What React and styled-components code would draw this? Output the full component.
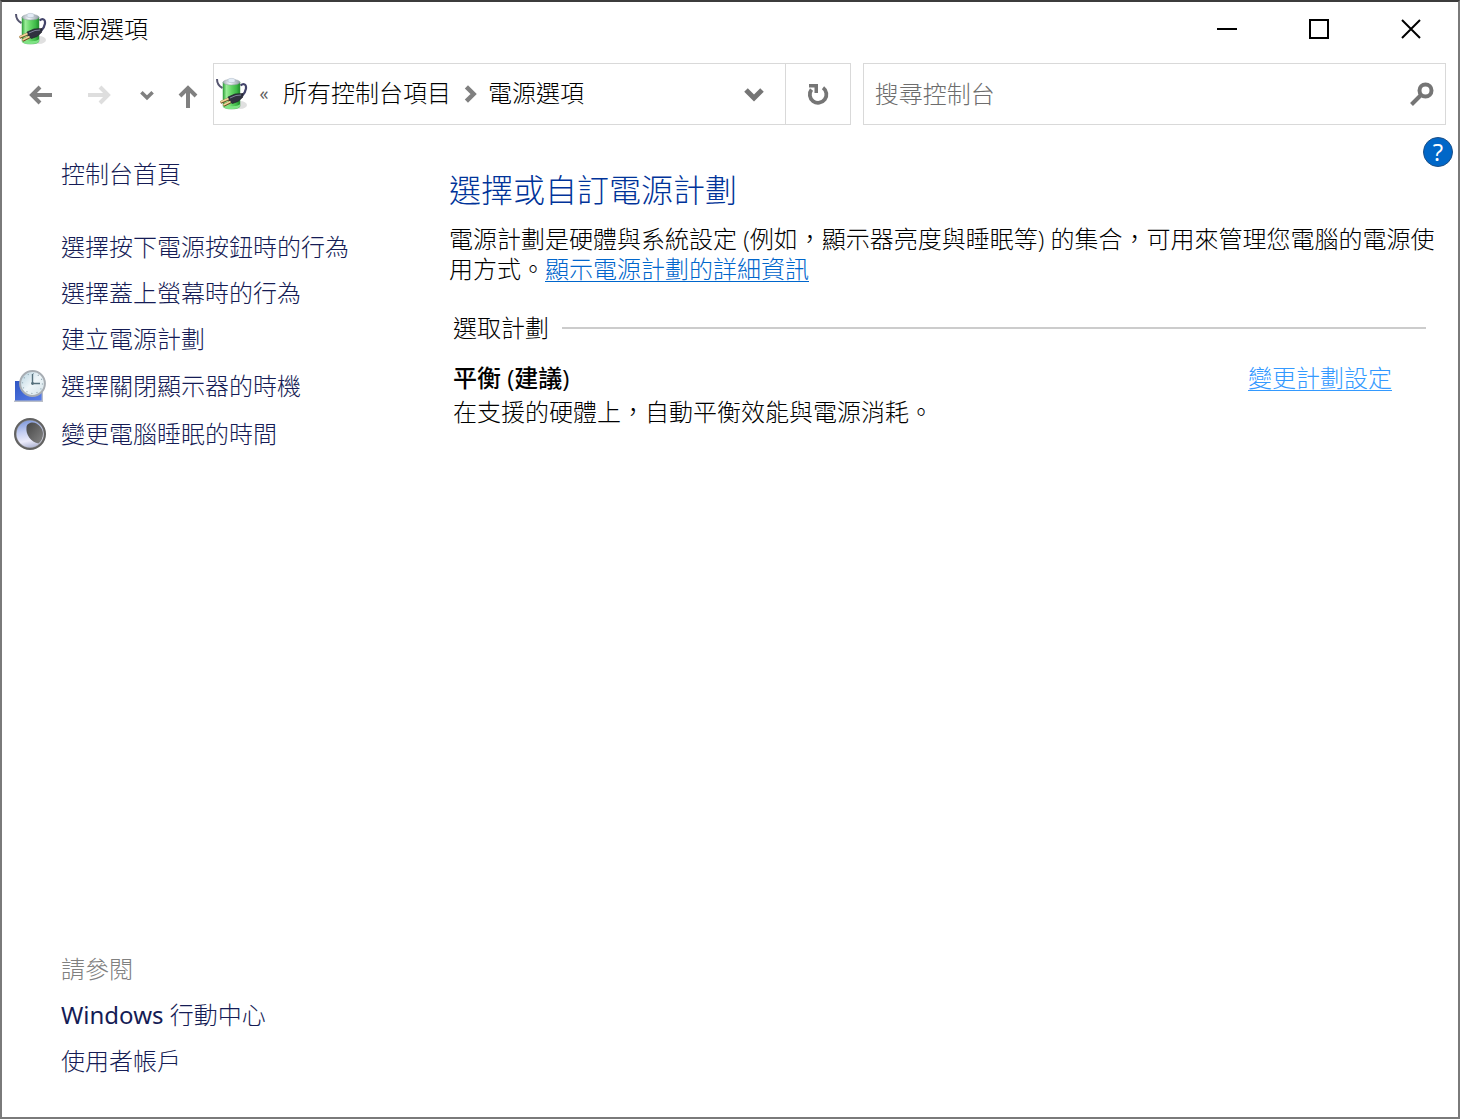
import React from "react";
import styled, { createGlobalStyle } from "styled-components";

const GlobalStyle = createGlobalStyle`
  * {
    box-sizing: border-box;
  }
  body {
    margin: 0;
    background: #ffffff;
  }
  body, button, input {
    font-family: "Open Sans", "Noto Sans CJK TC", sans-serif;
    font-size: 24px;
    font-weight: 300;
  }
`;

const tasks = [
  { label: "選擇按下電源按鈕時的行為" },
  { label: "選擇蓋上螢幕時的行為" },
  { label: "建立電源計劃" },
  { label: "選擇關閉顯示器的時機", icon: <ClockIcon /> },
  { label: "變更電腦睡眠的時間", icon: <MoonIcon /> },
];

function BatteryIcon({ id }) {
  return (
    <svg width="32" height="34" viewBox="0 0 32 34" aria-hidden="true">
      <defs>
        <linearGradient id={`${id}-body`} x1="0" x2="1" y1="0" y2="0">
          <stop offset="0" stopColor="#2fa53a" />
          <stop offset="0.2" stopColor="#9aec98" />
          <stop offset="0.5" stopColor="#63d566" />
          <stop offset="0.8" stopColor="#3db947" />
          <stop offset="1" stopColor="#1f8a2b" />
        </linearGradient>
        <linearGradient id={`${id}-cap`} x1="0" x2="1" y1="0" y2="0">
          <stop offset="0" stopColor="#a3adb5" />
          <stop offset="0.4" stopColor="#f4f8fb" />
          <stop offset="1" stopColor="#8f9aa4" />
        </linearGradient>
      </defs>
      <ellipse cx="24" cy="28" rx="7" ry="4" fill="#000000" opacity="0.12" />
      <path d="M1 2c0 4 1.500 7 5.500 9" fill="none" stroke="#55556f" strokeWidth="2" />
      <path d="M7 5v24c0 4 17 4 17 0V5z" fill={`url(#${id}-body)`} stroke="#3f9b48" strokeWidth="0.500" />
      <path d="M7 27v2c0 4 17 4 17 0v-2c-1 3-16 3-17 0z" fill="#7fe385" />
      <ellipse cx="15.500" cy="5.200" rx="8.500" ry="2.800" fill={`url(#${id}-cap)`} stroke="#8e99a0" strokeWidth="0.500" />
      <path d="M12 4.500V2.600c0-1.600 7-1.600 7 0v1.900c0 1.400-7 1.400-7 0z" fill="#e3ebf5" stroke="#a5b3c0" strokeWidth="0.500" />
      <path d="M24.500 8.500c3-2.500 6-1.500 5.500 3C29.500 15 28 17 26 19" fill="none" stroke="#43446a" strokeWidth="2.200" />
      <path d="M12 20l7-3 8-.5-.5 4-4.500 4-5.500 2-3.500-2z" fill="#30323f" stroke="#191a23" strokeWidth="0.600" />
      <path d="M14 21l6-2.500 5-.5" fill="none" stroke="#80849a" strokeWidth="1" />
      <path d="M12.500 22L4.500 25.500M14.500 25L7.500 28.500" stroke="#6d4a20" strokeWidth="3" />
      <path d="M12.500 21.600L4.500 25M14.500 24.600L7.500 28" stroke="#f3d49a" strokeWidth="1.700" />
    </svg>
  );
}

function ClockIcon() {
  return (
    <svg width="32" height="32" viewBox="0 0 32 32" aria-hidden="true">
      <defs>
        <linearGradient id="clock-screen" x1="0" x2="1" y1="0" y2="1">
          <stop offset="0" stopColor="#2f56c4" />
          <stop offset="1" stopColor="#5b80ea" />
        </linearGradient>
        <linearGradient id="clock-face" x1="0" x2="1" y1="0" y2="1">
          <stop offset="0" stopColor="#b5d0de" />
          <stop offset="0.5" stopColor="#eef6f9" />
          <stop offset="1" stopColor="#d3e2e9" />
        </linearGradient>
      </defs>
      <path d="M1 11h27v20H1z" fill="url(#clock-screen)" />
      <path d="M0 31.200h29M28.300 20v11" stroke="#b9bec8" strokeWidth="1.400" />
      <circle cx="18.500" cy="13.500" r="12.400" fill="url(#clock-face)" stroke="#a7adb3" strokeWidth="2" />
      <circle cx="18.500" cy="13.500" r="10" fill="none" stroke="#8da3ae" strokeWidth="1.200" strokeDasharray="1 4.240" />
      <path d="M18.500 4v10M18 13.500h8" fill="none" stroke="#55707c" strokeWidth="1.400" />
      <circle cx="18.500" cy="13.500" r="1.400" fill="#55707c" />
    </svg>
  );
}

function MoonIcon() {
  return (
    <svg width="32" height="32" viewBox="0 0 32 32" aria-hidden="true">
      <defs>
        <linearGradient id="moon-dark" x1="0" x2="1" y1="0" y2="1">
          <stop offset="0" stopColor="#454545" />
          <stop offset="1" stopColor="#858585" />
        </linearGradient>
        <linearGradient id="moon-light" x1="0.3" x2="0.5" y1="0" y2="1">
          <stop offset="0" stopColor="#7f99dc" />
          <stop offset="0.4" stopColor="#c3cdf2" />
          <stop offset="0.75" stopColor="#ececfb" />
          <stop offset="1" stopColor="#b4b9d6" />
        </linearGradient>
      </defs>
      <circle cx="16" cy="16" r="15" fill="#8c8c8c" stroke="#626262" strokeWidth="2" />
      <circle cx="16" cy="16" r="13.500" fill="url(#moon-light)" />
      <path d="M12.500 9c.5-4 6-5.500 10-3.500 4 2.500 6.500 6 6.500 10.500 0 4-1.500 7-4.500 9.500C17 24 11.500 17 12.500 9z" fill="url(#moon-dark)" />
    </svg>
  );
}

function ArrowIcon({ turn = 0 }) {
  return (
    <svg width="24" height="24" viewBox="0 0 24 24" fill="none" stroke="currentColor" strokeWidth="4" aria-hidden="true">
      <path d="M23 12H3M11 4l-8 8 8 8" transform={`rotate(${turn} 12 12)`} />
    </svg>
  );
}

function ChevronIcon({ size, turn = 0 }) {
  return (
    <svg width={size} height={size} viewBox="0 0 20 20" fill="none" stroke="currentColor" strokeWidth="5" aria-hidden="true">
      <path d="M2 6l8 8 8-8" transform={`rotate(${turn} 10 10)`} />
    </svg>
  );
}

function App() {
  return (
    <>
      <GlobalStyle />
      <Window>
        <TitleBar>
          <BatteryIcon id="title" />
          <Title>電源選項</Title>
          <CaptionButton aria-label="最小化">
            <svg width="20" height="20" viewBox="0 0 20 20">
              <path d="M0 10h20" stroke="#000000" strokeWidth="2" />
            </svg>
          </CaptionButton>
          <CaptionButton aria-label="最大化">
            <svg width="20" height="20" viewBox="0 0 20 20">
              <path d="M1 1h18v18H1z" fill="none" stroke="#000000" strokeWidth="2" />
            </svg>
          </CaptionButton>
          <CaptionButton aria-label="關閉">
            <svg width="20" height="20" viewBox="0 0 20 20">
              <path d="M1 1l18 18M19 1L1 19" stroke="#000000" strokeWidth="2" />
            </svg>
          </CaptionButton>
        </TitleBar>

        <NavBar>
          <NavButton $width={58} aria-label="上一頁">
            <ArrowIcon />
          </NavButton>
          <NavButton $width={58} $color="#dedede" aria-label="下一頁" disabled>
            <ArrowIcon turn={180} />
          </NavButton>
          <NavButton $width={38} aria-label="最近的位置">
            <ChevronIcon size={14} />
          </NavButton>
          <NavButton $width={44} $drop={5} aria-label="上移">
            <ArrowIcon turn={90} />
          </NavButton>
          <Address>
            <BatteryIcon id="address" />
            <Overflow>«</Overflow>
            <Crumb>所有控制台項目</Crumb>
            <Separator>
              <ChevronIcon size={18} turn={-90} />
            </Separator>
            <Crumb>電源選項</Crumb>
            <DropButton aria-label="先前的位置">
              <ChevronIcon size={20} />
            </DropButton>
            <RefreshButton aria-label="重新整理">
              <svg width="22" height="24" viewBox="0 0 22 24" aria-hidden="true">
                <path d="M4.500 7.500A8.300 8.300 0 1 0 16 5.800" fill="none" stroke="currentColor" strokeWidth="3.800" />
                <path d="M2 2h9v9H7.500V5.500H2z" fill="currentColor" />
              </svg>
            </RefreshButton>
          </Address>
          <Search>
            <SearchInput type="search" placeholder="搜尋控制台" aria-label="搜尋控制台" />
            <svg width="24" height="24" viewBox="0 0 24 24" fill="none" stroke="#757575" strokeWidth="4" aria-hidden="true">
              <circle cx="15.500" cy="8.500" r="6" />
              <path d="M11 13l-9.500 9.500" />
            </svg>
          </Search>
        </NavBar>

        <Body>
          <Sidebar>
            <HomeLink href="#home">控制台首頁</HomeLink>
            {tasks.map((task) => (
              <TaskRow key={task.label} $tall={!!task.icon}>
                <IconSlot>{task.icon}</IconSlot>
                <SideLink href="#task">{task.label}</SideLink>
              </TaskRow>
            ))}
            <SeeAlso>
              <SeeAlsoTitle>請參閱</SeeAlsoTitle>
              <SideLink href="#mobility">
                <Latin>Windows</Latin> 行動中心
              </SideLink>
              <SideLink href="#accounts">使用者帳戶</SideLink>
            </SeeAlso>
          </Sidebar>

          <Main>
            <HelpButton aria-label="說明">?</HelpButton>
            <Heading>選擇或自訂電源計劃</Heading>
            <Intro>
              電源計劃是硬體與系統設定 (例如，顯示器亮度與睡眠等) 的集合，可用來管理您電腦的電源使用方式。
              <DetailLink href="#details">顯示電源計劃的詳細資訊</DetailLink>
            </Intro>
            <Plans>
              <GroupTitle>選取計劃</GroupTitle>
              <PlanRow>
                <PlanName>平衡 (建議)</PlanName>
                <ChangeLink href="#settings">變更計劃設定</ChangeLink>
              </PlanRow>
              <PlanText>在支援的硬體上，自動平衡效能與電源消耗。</PlanText>
            </Plans>
          </Main>
        </Body>
      </Window>
    </>
  );
}

const Window = styled.div`
  display: flex;
  flex-direction: column;
  min-height: 100vh;
  border: 2px solid #7a7a7a;
  border-top-color: #3c3c3c;
  background: #ffffff;
  color: #000000;
`;
const TitleBar = styled.header`
  display: flex;
  align-items: center;
  height: 54px;
  padding: 0 1px 0 13px;
`;
const Title = styled.h1`
  flex: 1;
  margin: 0 0 0 5px;
  font-size: 24px;
  font-weight: 300;
  line-height: 32px;
`;
const CaptionButton = styled.button`
  display: flex;
  align-items: center;
  justify-content: center;
  width: 92px;
  height: 54px;
  padding: 0;
  border: none;
  background: none;
`;
const NavBar = styled.nav`
  display: flex;
  align-items: center;
  height: 76px;
  padding: 0 12px 0 10px;
`;
const NavButton = styled.button`
  display: flex;
  flex-shrink: 0;
  align-items: center;
  justify-content: center;
  width: ${(props) => props.$width}px;
  height: 62px;
  padding: ${(props) => props.$drop || 2}px 0 0;
  border: none;
  background: none;
  color: ${(props) => props.$color || "#808080"};
`;
const Address = styled.div`
  display: flex;
  flex: 17 1 0;
  align-items: center;
  height: 62px;
  margin: 0 12px 0 3px;
  padding-left: 2px;
  border: 1px solid #d9d9d9;
`;
const Overflow = styled.span`
  width: 32px;
  padding-bottom: 3px;
  color: #606060;
  font-size: 18px;
  font-weight: 400;
  line-height: 32px;
  text-align: center;
`;
const Crumb = styled.button`
  padding: 0 0 2px;
  border: none;
  background: none;
  color: #000000;
  line-height: 32px;
  white-space: nowrap;
  ${Overflow} + & {
    margin-left: 3px;
  }
`;
const Separator = styled.span`
  display: flex;
  justify-content: center;
  width: 37px;
  color: #808080;
`;
const DropButton = styled.button`
  display: flex;
  align-items: center;
  justify-content: center;
  width: 62px;
  height: 60px;
  margin-left: auto;
  padding: 0;
  border: none;
  background: none;
  color: #757575;
`;
const RefreshButton = styled(DropButton)`
  width: 65px;
  margin-left: 0;
  border-left: 1px solid #d9d9d9;
`;
const Search = styled.div`
  display: flex;
  flex: 15 1 0;
  align-items: center;
  height: 62px;
  min-width: 0;
  padding: 0 11px;
  border: 1px solid #d9d9d9;
`;
const SearchInput = styled.input`
  flex: 1;
  min-width: 0;
  padding: 0;
  border: none;
  outline: none;
  background: none;
  line-height: 32px;
  &::placeholder {
    color: #6d6d6d;
    opacity: 1;
  }
`;
const Body = styled.div`
  display: flex;
  flex: 1;
`;
const Sidebar = styled.aside`
  display: flex;
  flex-direction: column;
  flex-shrink: 0;
  width: 447px;
  padding: 19px 0 33px 12px;
`;
const SideLink = styled.a`
  color: #151c55;
  line-height: 46px;
  text-decoration: none;
`;
const HomeLink = styled(SideLink)`
  margin: 0 0 27px 47px;
`;
const TaskRow = styled.div`
  display: flex;
  align-items: center;
  height: ${(props) => (props.$tall ? 48 : 46)}px;
`;
const IconSlot = styled.span`
  display: flex;
  width: 47px;
`;
const SeeAlso = styled.section`
  display: flex;
  flex-direction: column;
  margin: auto 0 0 47px;
`;
const SeeAlsoTitle = styled.span`
  color: #808080;
  line-height: 46px;
`;
const Latin = styled.span`
  font-family: "Noto Sans", sans-serif;
  font-weight: 400;
`;
const Main = styled.main`
  display: flex;
  flex: 1;
  flex-direction: column;
  padding: 5px 5px 0 0;
`;
const HelpButton = styled.button`
  align-self: flex-end;
  width: 30px;
  height: 30px;
  padding: 0;
  border: 1px solid #1d4f86;
  border-radius: 50%;
  background: #0067c8;
  color: #ffffff;
  font-weight: 400;
  line-height: 28px;
`;
const Heading = styled.h2`
  margin: 3px 0 14px;
  color: #003399;
  font-size: 32px;
  font-weight: 300;
  line-height: 40px;
`;
const Intro = styled.p`
  margin: 0 9px 0 0;
  line-height: 30px;
`;
const DetailLink = styled.a`
  color: #0066cc;
  text-decoration: underline;
  text-decoration-thickness: 1px;
  text-underline-offset: 3px;
`;
const Plans = styled.section`
  margin: 28px 27px 0 4px;
`;
const GroupTitle = styled.h3`
  display: flex;
  align-items: center;
  margin: 0 0 18px;
  font-size: 24px;
  font-weight: 300;
  line-height: 32px;
  &::after {
    content: "";
    flex: 1;
    height: 2px;
    margin-left: 13px;
    background: #cccccc;
  }
`;
const PlanRow = styled.div`
  display: flex;
  justify-content: space-between;
  padding-right: 34px;
  line-height: 32px;
`;
const PlanName = styled.strong`
  font-weight: 500;
`;
const ChangeLink = styled(DetailLink)`
  color: #3399ff;
`;
const PlanText = styled.p`
  margin: 2px 0 0;
  line-height: 32px;
`;

export default App;
